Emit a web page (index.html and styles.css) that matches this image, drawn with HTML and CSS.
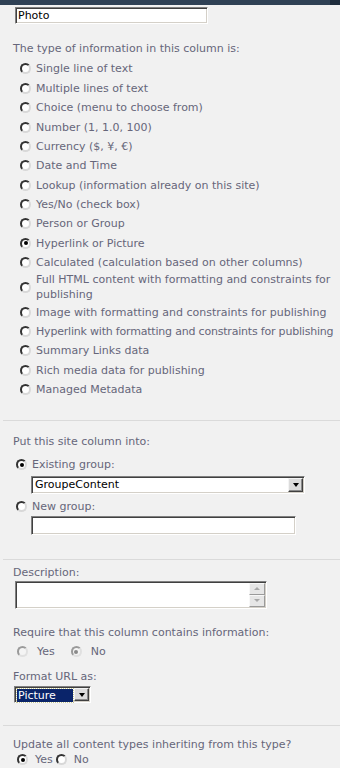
FILE: index.html
```html
<!DOCTYPE html>
<html>
	<head>
		<meta charset="utf-8">
		<title>Site column</title>
		<link rel="stylesheet" href="styles.css">
	</head>
	<body>
		<div class="topbar"><span class="topbar-end"></span></div>
		<div class="page">
			<div class="section first">
				<input type="text" class="textbox name" value="Photo">
				<p class="label">The type of information in this column is:</p>
				<ul class="choices">
					<li><span class="radio"></span>Single line of text</li>
					<li><span class="radio"></span>Multiple lines of text</li>
					<li><span class="radio"></span>Choice (menu to choose from)</li>
					<li><span class="radio"></span>Number (1, 1.0, 100)</li>
					<li><span class="radio"></span>Currency ($, ¥, €)</li>
					<li><span class="radio"></span>Date and Time</li>
					<li><span class="radio"></span>Lookup (information already on this site)</li>
					<li><span class="radio"></span>Yes/No (check box)</li>
					<li><span class="radio"></span>Person or Group</li>
					<li><span class="radio on"></span>Hyperlink or Picture</li>
					<li><span class="radio"></span>Calculated (calculation based on other columns)</li>
					<li class="multi"><span class="radio"></span>Full HTML content with formatting and constraints for publishing</li>
					<li><span class="radio"></span>Image with formatting and constraints for publishing</li>
					<li class="nowrap"><span class="radio"></span>Hyperlink with formatting and constraints for publishing</li>
					<li><span class="radio"></span>Summary Links data</li>
					<li><span class="radio"></span>Rich media data for publishing</li>
					<li><span class="radio"></span>Managed Metadata</li>
				</ul>
			</div>
			<div class="section group">
				<p class="label">Put this site column into:</p>
				<div class="opt existing"><span class="radio on"></span>Existing group:</div>
				<div class="dropdown groups"><span class="value">GroupeContent</span><span class="arrow"></span></div>
				<div class="opt newgroup"><span class="radio"></span>New group:</div>
				<input type="text" class="textbox newname">
			</div>
			<div class="section extra">
				<p class="label">Description:</p>
				<div class="memo">
					<div class="scroll"><span class="up"></span><span class="down"></span></div>
				</div>
				<p class="label require">Require that this column contains information:</p>
				<div class="pair req">
					<span class="radio dim"></span><span class="yes">Yes</span>
					<span class="radio dim on"></span><span>No</span>
				</div>
				<p class="label format">Format URL as:</p>
				<div class="dropdown picture"><span class="value"><span class="sel">Picture</span></span><span class="arrow"></span></div>
			</div>
			<div class="section update">
				<p class="label">Update all content types inheriting from this type?</p>
				<div class="pair upd">
					<span class="radio on"></span><span class="yes">Yes</span>
					<span class="radio"></span><span>No</span>
				</div>
			</div>
		</div>
	</body>
</html>
```

FILE: styles.css
```css
body{
	margin: 0;
	background-color: #f1f1f1;
	font: 11px "DejaVu Sans", Verdana, sans-serif;
	color: #66667a;
}
.topbar{
	height: 5px;
	background-color: #2f4155;
	display: flex;
	justify-content: flex-end;
}
.topbar-end{width: 10px;background-color: #1f2d3c;}
.page{padding-left: 3px;}
.section{
	border-top: 1px solid #dadada;
	padding-left: 10px;
}
.label{margin: 0;line-height: 15px;}

/* inputs drawn the old windows way */
.textbox{
	box-sizing: border-box;
	display: block;
	margin: 0;
	padding: 0 2px;
	border: 1px solid;
	border-color: #808080 #fff #fff #808080;
	box-shadow: inset 1px 1px #404040, inset -1px -1px #d4d0c8;
	background: #fff;
	font: inherit;
	color: #000;
	outline: none;
}
.radio{
	box-sizing: border-box;
	flex-shrink: 0;
	width: 11px;
	height: 11px;
	border: 2px solid;
	border-color: #333 #d8d8d8 #d8d8d8 #333;
	border-radius: 50%;
	background: #fff;
	display: flex;
	align-items: center;
	justify-content: center;
}
.radio.on::after{
	content: "";
	width: 4px;
	height: 4px;
	border-radius: 50%;
	background: #000;
}
.radio.dim{border-color: #9a9a9a #e0e0e0 #e0e0e0 #9a9a9a;background: #f4f4f4;}
.radio.dim.on::after{background: #8a8a8a;}

/* first block */
.first{border-top: 0;padding: 2px 0 20.25px 10px;}
.name{margin-left: 2px;width: 193px;height: 17px;}
.first .label{margin-top: 16.5px;}
.choices{
	list-style: none;
	margin: 3.75px 0 0;
	padding: 0 0 0 7px;
}
.choices li{
	display: flex;
	align-items: center;
	gap: 5px;
	padding: 2.2px 0;
	line-height: 15px;
}
.choices li.multi{padding: 0;}
.choices li.nowrap{white-space: nowrap;letter-spacing: -0.2px;}

/* group block */
.group{padding-top: 13.5px;padding-bottom: 24px;}
.opt{
	display: flex;
	align-items: center;
	gap: 5px;
	height: 18px;
	padding-left: 3px;
}
.existing{margin-top: 6.5px;}
.newgroup{margin-top: 4px;}
.dropdown{
	box-sizing: border-box;
	display: flex;
	border: 1px solid;
	border-color: #808080 #fff #fff #808080;
	box-shadow: inset 1px 1px #404040, inset -1px -1px #d4d0c8;
	background: #fff;
	color: #000;
	padding: 1px;
}
.dropdown .value{flex: 1;padding-left: 2px;line-height: 14px;}
.dropdown .arrow{
	box-sizing: border-box;
	width: 15px;
	border: 1px solid;
	border-color: #f4f4f4 #404040 #404040 #f4f4f4;
	box-shadow: inset -1px -1px #8a8a8a;
	background: #dcdcdc;
	display: flex;
	align-items: center;
	justify-content: center;
}
.dropdown .arrow::after{
	content: "";
	border-left: 3px solid transparent;
	border-right: 3px solid transparent;
	border-top: 4px solid #000;
	margin-top: 1px;
}
.groups{margin: 2px 0 0 18px;width: 274px;height: 18px;}
.newname{margin-left: 18px;width: 265px;height: 19px;}

/* description block */
.extra{padding-top: 5.5px;padding-bottom: 22px;}
.memo{
	box-sizing: border-box;
	margin: 0.5px 0 0 2px;
	width: 252px;
	height: 28px;
	border: 1px solid;
	border-color: #808080 #fff #fff #808080;
	box-shadow: inset 1px 1px #404040, inset -1px -1px #d4d0c8;
	background: #fff;
	display: flex;
	justify-content: flex-end;
	padding: 1px;
}
.scroll{width: 16px;display: flex;flex-direction: column;}
.scroll span{
	flex: 1;
	box-sizing: border-box;
	border: 1px solid;
	border-color: #f8f8f8 #9a9a9a #9a9a9a #f8f8f8;
	background: #e6e6e6;
	display: flex;
	align-items: center;
	justify-content: center;
}
.scroll .up::after{
	content: "";
	border-left: 3px solid transparent;
	border-right: 3px solid transparent;
	border-bottom: 3px solid #a8a8a8;
}
.scroll .down::after{
	content: "";
	border-left: 3px solid transparent;
	border-right: 3px solid transparent;
	border-top: 3px solid #a8a8a8;
}
.require{margin-top: 16.5px;}
.pair{
	display: flex;
	align-items: center;
	line-height: 15px;
	padding-left: 4px;
}
.req{margin-top: 4px;}
.req .radio{margin-right: 9px;}
.req .yes{margin-right: 16px;}
.upd .radio{margin-right: 7px;}
.upd .yes{margin-right: 3px;}
.format{margin-top: 10px;}
.picture{margin: 1.5px 0 0 1px;width: 77px;height: 17px;}
.picture .value{padding: 1px 1px 0 1px;line-height: 13px;}
.picture .sel{
	display: block;
	background: #0a246a;
	color: #fff;
	outline: 1px dotted #c8c890;
	padding-left: 1px;
}

/* last block */
.update{padding-top: 11.5px;}
```
